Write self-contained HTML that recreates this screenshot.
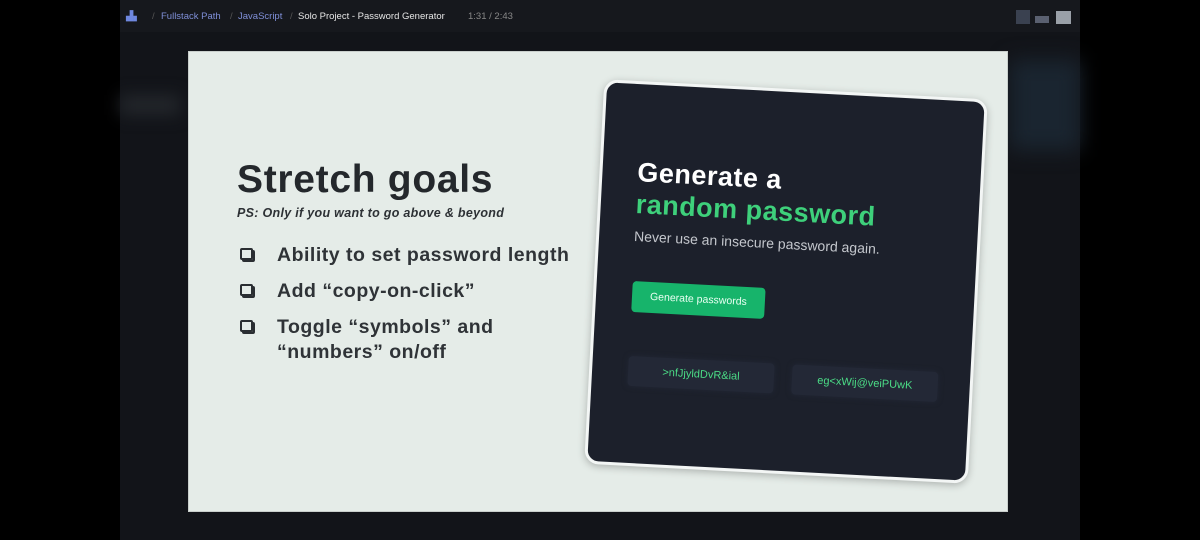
<!DOCTYPE html>
<html><head><meta charset="utf-8"><style>
*{margin:0;padding:0;box-sizing:border-box}
body{width:1200px;height:540px;background:#000;position:relative;overflow:hidden;font-family:"Liberation Sans",sans-serif}
.app{position:absolute;left:120px;top:0;width:960px;height:540px;background:#121419}
.top{position:absolute;left:0;top:0;width:960px;height:32px;background:#16181d;font-size:9.5px;color:#7f8fd8}
.top span{position:absolute;top:11px}
.slide{position:absolute;left:188px;top:51px;width:820px;height:461px;background:#e5ece8;border:1px solid #c9cfcc}
h1{position:absolute;left:237px;top:158px;font-size:39px;font-weight:bold;color:#24282c;letter-spacing:0.7px}
.ps{position:absolute;left:237px;top:206px;font-size:12.5px;font-style:italic;font-weight:bold;color:#2d3135;letter-spacing:.3px}
.li{position:absolute;left:277px;font-size:19.5px;font-weight:bold;color:#2f3337;line-height:25px;letter-spacing:.5px}
.cb{position:absolute;left:240px;width:13px;height:12px;border:2px solid #2a2e32;border-radius:2px;box-shadow:2px 2px 0 #2a2e32}
.card{position:absolute;left:594px;top:89px;width:384px;height:385px;background:#1c202b;border:3px solid #f3f6f5;border-radius:14px;transform:rotate(3deg);box-shadow:0 2px 8px rgba(0,0,0,.25)}
.card .h{position:absolute;left:35px;top:72px;font-size:27px;font-weight:bold;color:#fff;line-height:32px;letter-spacing:.5px}
.card .h b{color:#3ed07b}
.card .s{position:absolute;left:35px;top:144px;font-size:14px;color:#c3c6cc}
.btn{position:absolute;left:36px;top:197px;width:133px;height:31px;background:#17b46b;border-radius:4px;color:#e9fff2;font-size:10.5px;line-height:31px;text-align:center}
.pw{position:absolute;top:272px;width:146px;height:30px;background:#232836;border-radius:4px;color:#4bdc86;font-size:11px;line-height:30px;text-align:center;box-shadow:0 0 6px #232836}
</style></head><body>
<div class="app">
<div class="top">
<span style="left:6px;color:#6f88e0">▟▖</span>
<span style="left:32px;color:#555">/</span>
<span style="left:41px">Fullstack Path</span>
<span style="left:110px;color:#555">/</span>
<span style="left:118px">JavaScript</span>
<span style="left:170px;color:#555">/</span>
<span style="left:178px;color:#e6e6e6">Solo Project - Password Generator</span>
<span style="left:348px;color:#888">1:31 / 2:43</span>
<span style="left:896px;top:10px;width:14px;height:14px;background:#3a4150"></span>
<span style="left:915px;top:16px;width:14px;height:7px;background:#5a6070"></span>
<span style="left:936px;top:11px;width:15px;height:13px;background:#9aa0a8"></span>
</div>
<div style="position:absolute;left:0;top:95px;width:60px;height:20px;background:#23262b;filter:blur(8px)"></div>
<div style="position:absolute;left:890px;top:60px;width:70px;height:90px;background:#1a2530;filter:blur(10px)"></div>
</div>
<div class="slide"></div>
<h1>Stretch goals</h1>
<div class="ps">PS: Only if you want to go above &amp; beyond</div>
<div class="cb" style="top:248px"></div><div class="li" style="top:243px">Ability to set password length</div>
<div class="cb" style="top:284px"></div><div class="li" style="top:279px">Add “copy-on-click”</div>
<div class="cb" style="top:320px"></div><div class="li" style="top:315px">Toggle “symbols” and<br>“numbers” on/off</div>
<div class="card">
<div class="h">Generate a<br><b>random password</b></div>
<div class="s">Never use an insecure password again.</div>
<div class="btn">Generate passwords</div>
<div class="pw" style="left:36px">&gt;nfJjyldDvR&amp;ial</div>
<div class="pw" style="left:200px">eg&lt;xWij@veiPUwK</div>
</div>
</body></html>
